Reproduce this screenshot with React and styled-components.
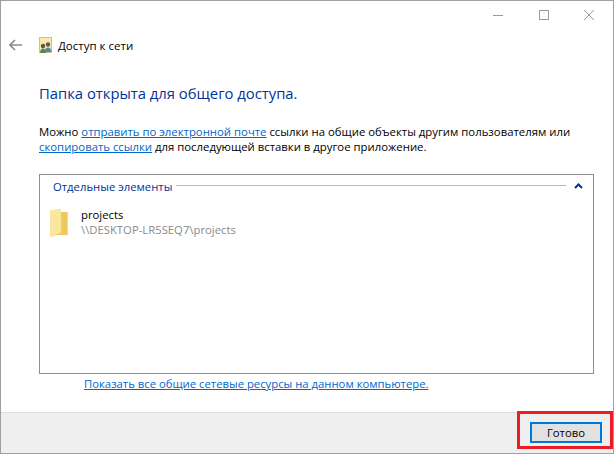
import React from "react";
import styled, { createGlobalStyle } from "styled-components";

const GlobalStyle = createGlobalStyle`
  html, body { margin: 0; padding: 0; background: #fff; }
  * { box-sizing: border-box; }
`;

const FONT = `"Open Sans", "Noto Sans", "Liberation Sans", sans-serif`;

function App() {
  return (
    <>
      <GlobalStyle />
      <Frame>
        <TitleBar>
          <WinButton>
            <svg width="10" height="10" viewBox="0 0 10 10"><path d="M0 5.5H10" stroke="#9a9a9a" /></svg>
          </WinButton>
          <WinButton>
            <svg width="10" height="10" viewBox="0 0 10 10"><rect x="0.5" y="0.5" width="9" height="9" fill="none" stroke="#9a9a9a" /></svg>
          </WinButton>
          <WinButton>
            <svg width="10" height="10" viewBox="0 0 10 10"><path d="M0 0L10 10M10 0L0 10" stroke="#9a9a9a" /></svg>
          </WinButton>
        </TitleBar>
        <NavRow>
          <BackButton>
            <svg width="13" height="12" viewBox="0 0 13 12"><path d="M6 1L1 6L6 11M1 6H13" fill="none" stroke="#8a8a8a" strokeWidth="1.6" /></svg>
          </BackButton>
          <NavIcon>
            <svg width="13" height="16" viewBox="0 0 13 16">
              <rect x="0.5" y="0.5" width="12" height="15" fill="#fbe9a8" stroke="#e2c35a" />
              <circle cx="4" cy="9" r="2.2" fill="#5a5a46" />
              <path d="M1 16c0-3 1.5-4.5 3-4.5s3 1.5 3 4.5z" fill="#4b8a5a" />
              <circle cx="9" cy="7.5" r="2.2" fill="#54606e" />
              <path d="M5.5 15c0-3 2-4.5 3.5-4.5s3.5 1.5 3.5 4.5z" fill="#4a86b8" />
            </svg>
          </NavIcon>
          <NavTitle>Доступ к сети</NavTitle>
        </NavRow>
        <Content>
          <Heading>Папка открыта для общего доступа.</Heading>
          <Intro>
            Можно <Link>отправить по электронной почте</Link> ссылки на общие объекты другим пользователям или
            <br />
            <Link>скопировать ссылки</Link> для последующей вставки в другое приложение.
          </Intro>
          <Group>
            <GroupHeader>
              <GroupTitle>Отдельные элементы</GroupTitle>
              <GroupRule />
              <Collapse>
                <svg width="9" height="6" viewBox="0 0 9 6"><path d="M1 5L4.5 1.5L8 5" fill="none" stroke="#003399" strokeWidth="2" /></svg>
              </Collapse>
            </GroupHeader>
            <Item>
              <svg width="18" height="28" viewBox="0 0 18 28">
                <path d="M0 1.5L11 0V3H17.5V26H6L0 28z" fill="#f3d56f" />
                <path d="M0 1.5L11 0V23.5L0 28z" fill="#fbe6a0" />
                <path d="M11 3H17.5V26H6L11 23.5z" fill="#eec95c" />
              </svg>
              <ItemText>
                <ItemName>projects</ItemName>
                <ItemPath>\\DESKTOP-LR5SEQ7\projects</ItemPath>
              </ItemText>
            </Item>
          </Group>
          <ShowAll><Link>Показать все общие сетевые ресурсы на данном компьютере.</Link></ShowAll>
        </Content>
        <Footer>
          <DoneHighlight>
            <DoneButton>Готово</DoneButton>
          </DoneHighlight>
        </Footer>
        <LeftAccent />
      </Frame>
    </>
  );
}

const Frame = styled.div`
  position: relative;
  width: 614px;
  height: 454px;
  display: flex;
  flex-direction: column;
  border: 1px solid #a0a0a0;
  background: #fff;
  font-family: ${FONT};
  font-size: 11.3px;
  color: #000;
  overflow: hidden;
`;

const LeftAccent = styled.div`
  position: absolute;
  left: -1px;
  top: 345px;
  width: 1px;
  height: 36px;
  background: #2a73b0;
`;

const TitleBar = styled.div`
  display: flex;
  justify-content: flex-end;
  height: 29px;
  padding: 0 1px 1px 0;
`;

const WinButton = styled.div`
  width: 45.5px;
  display: flex;
  align-items: center;
  justify-content: center;
`;

const NavRow = styled.div`
  display: flex;
  align-items: center;
  height: 30px;
  padding-left: 8px;
`;

const BackButton = styled.div`
  display: flex;
  width: 30px;
`;

const NavIcon = styled.div`
  display: flex;
  width: 19px;
`;

const NavTitle = styled.div`
  font-size: 11.5px;
`;

const Content = styled.div`
  flex: 1;
  display: flex;
  flex-direction: column;
  padding-left: 38px;
`;

const Heading = styled.div`
  font-size: 14.8px;
  color: #003399;
  margin-top: 23px;
  line-height: 20px;
`;

const Intro = styled.div`
  margin-top: 21px;
  font-size: 11.35px;
  line-height: 15px;
`;

const Link = styled.span`
  color: #0066cc;
  text-decoration: underline;
`;

const Group = styled.div`
  width: 555px;
  height: 200px;
  margin-top: 20px;
  border: 1px solid #8e8f94;
  padding: 0 10px 0 13px;
`;

const GroupHeader = styled.div`
  display: flex;
  align-items: center;
  height: 21px;
`;

const GroupTitle = styled.div`
  padding-top: 2px;
  color: #003399;
  white-space: nowrap;
`;

const GroupRule = styled.div`
  flex: 1;
  height: 1px;
  margin-left: 4px;
  background: #a6bde8;
`;

const Collapse = styled.div`
  display: flex;
  margin-left: 8px;
`;

const Item = styled.div`
  display: flex;
  align-items: flex-start;
  gap: 13px;
  margin: 13px 0 0 -3px;
`;

const ItemText = styled.div`
  line-height: 15px;
  margin-top: -2px;
`;

const ItemName = styled.div``;

const ItemPath = styled.div`
  color: #8a8a8a;
`;

const ShowAll = styled.div`
  margin: 2px 0 0 45px;
  line-height: 15px;
`;

const Footer = styled.div`
  height: 41px;
  display: flex;
  justify-content: flex-end;
  align-items: flex-start;
  background: #efefef;
  border-top: 1px solid #dfdfdf;
`;

const DoneHighlight = styled.div`
  width: 96px;
  height: 38px;
  margin-top: -2px;
  border: 3px solid #ed1c24;
  padding: 8px 8px 0 10px;
`;

const DoneButton = styled.div`
  width: 72px;
  height: 21px;
  border: 2px solid #0078d7;
  background: #e1e1e1;
  display: flex;
  justify-content: center;
  align-items: center;
`;

export default App;
